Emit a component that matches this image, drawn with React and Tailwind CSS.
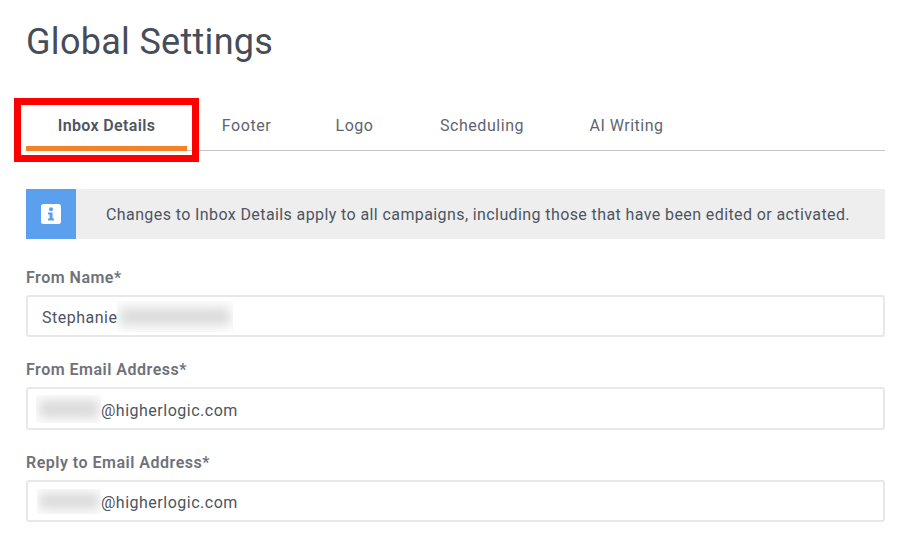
const font = { fontFamily: '"Roboto", "Liberation Sans", sans-serif' };

function Blur({ className, bar }) {
  return (
    <span className={`flex items-center justify-center overflow-hidden bg-[#fbfbfb] ${className}`}>
      <span className={`rounded-[6px] bg-[#dcdcdc] blur-[5px] ${bar}`} />
    </span>
  );
}

function Field({ label, mb, height, pt, children }) {
  return (
    <div className={mb}>
      <label className="block h-[24px] pt-[1px] text-[16px] leading-[24px] font-semibold tracking-[0.5px] text-[#6f7179]">{label}</label>
      <div className={`mt-[6px] flex items-center rounded-[3px] border-2 border-[#e8e8e8] bg-white text-[16px] tracking-[0.5px] text-[#4d5560] ${pt} ${height}`}>
        {children}
      </div>
    </div>
  );
}

export default function App() {
  const tabs = [
    ["Footer", "w-[119px]", "tracking-[0.55px]"],
    ["Logo", "w-[97px]", "tracking-[0.55px]"],
    ["Scheduling", "w-[163px]", "tracking-[0.55px] pr-[5px]"],
    ["AI Writing", "w-[122px]", "tracking-[0.5px] pr-[1px]"],
  ];
  return (
    <div className="relative h-[544px] w-[903px] overflow-hidden bg-white px-[26px]" style={font}>
      <h1 className="h-[100px] pt-[18px] text-[36px] leading-[48px] tracking-[0.3px] text-[#474c59]">Global Settings</h1>

      <div className="flex h-[51px] w-[859px] border-b border-[#c4c4c4]">
        <div className="flex h-[51px] w-[161px] items-center justify-center border-b-[5px] border-[#f58025] pt-[6px] text-[16px] font-semibold tracking-[0.35px] text-[#4e5563]">
          Inbox Details
        </div>
        {tabs.map(([t, w, x]) => (
          <div key={t} className={`flex h-[50px] items-center justify-center pt-[1px] text-[16px] text-[#5f6570] ${w} ${x}`}>{t}</div>
        ))}
      </div>

      <div className="mt-[38px] flex h-[50px] w-[859px] bg-[#eeeeee]">
        <div className="flex w-[50px] items-center justify-center bg-[#5ba0ef]">
          <svg width="20" height="20" viewBox="0 0 20 20">
            <rect width="20" height="20" rx="2.5" fill="#fff" />
            <circle cx="10" cy="5.2" r="2" fill="#5ba0ef" />
            <path d="M7 8.5h4.6v6H13V16.5H7v-2h1.5v-4H7z" fill="#5ba0ef" />
          </svg>
        </div>
        <p className="pl-[30px] pt-[1px] text-[16px] leading-[50px] tracking-[0.4px] text-[#4d5560]">
          Changes to Inbox Details apply to all campaigns, including those that have been edited or activated.
        </p>
      </div>

      <div className="mt-[26px] w-[859px]">
        <Field label="From Name*" mb="mb-[20px]" height="h-[42px]" pt="pt-[3px]">
          <span className="pl-[14px]">Stephanie</span>
          <Blur className="-mt-[3px] h-[31px] w-[116px]" bar="h-[17px] w-[110px]" />
        </Field>
        <Field label="From Email Address*" mb="mb-[20px]" height="h-[43px]" pt="pt-[4px]">
          <Blur className="-mt-[4px] ml-[8px] h-[28px] w-[65px]" bar="h-[18px] w-[60px]" />
          <span>@higherlogic.com</span>
        </Field>
        <Field label="Reply to Email Address*" height="h-[42px]" pt="pt-[3px]">
          <Blur className="-mt-[3px] ml-[9px] h-[25px] w-[64px]" bar="h-[16px] w-[60px]" />
          <span>@higherlogic.com</span>
        </Field>
      </div>

      <div className="pointer-events-none absolute left-[14px] top-[98px] h-[64px] w-[185px] border-[7px] border-[#ff0000]" />
    </div>
  );
}
